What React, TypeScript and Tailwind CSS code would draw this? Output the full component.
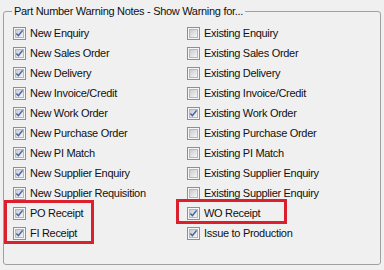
const left: [string, boolean][] = [
	["New Enquiry", true],
	["New Sales Order", true],
	["New Delivery", true],
	["New Invoice/Credit", true],
	["New Work Order", true],
	["New Purchase Order", true],
	["New PI Match", true],
	["New Supplier Enquiry", true],
	["New Supplier Requisition", true],
	["PO Receipt", true],
	["FI Receipt", true],
];

const right: [string, boolean][] = [
	["Existing Enquiry", false],
	["Existing Sales Order", false],
	["Existing Delivery", false],
	["Existing Invoice/Credit", false],
	["Existing Work Order", true],
	["Existing Purchase Order", false],
	["Existing PI Match", false],
	["Existing Supplier Enquiry", false],
	["Existing Supplier Enquiry", false],
	["WO Receipt", true],
	["Issue to Production", true],
];

function Box({ checked }: { checked: boolean }) {
	return (
		<svg width="13" height="13" viewBox="0 0 13 13" className="shrink-0">
			<defs>
				<linearGradient id="boxfill" x1="0" y1="0" x2="1" y2="1">
					<stop offset="0" stopColor="#c6c9cf" />
					<stop offset="1" stopColor="#f8f8f8" />
				</linearGradient>
			</defs>
			<rect x="0.5" y="0.5" width="12" height="12" fill="#f6f6f6" stroke="#8e8f8f" />
			<rect x="2.5" y="2.5" width="8" height="8" fill="url(#boxfill)" stroke="#b4b8be" />
			{checked && (
				<path
					d="M3.4 6.5 L5.4 8.7 L9.6 3.4"
					fill="none"
					stroke="#4462a0"
					strokeWidth="1.5"
				/>
			)}
		</svg>
	);
}

function Row({ label, checked }: { label: string; checked: boolean }) {
	return (
		<div className="flex h-[20px] items-center">
			<Box checked={checked} />
			<span className="ml-[4px] whitespace-nowrap text-[11px] leading-none tracking-[-0.3px] text-[#111]">
				{label}
			</span>
		</div>
	);
}

export default function App() {
	return (
		<div
			className="relative h-[270px] w-[384px] overflow-hidden bg-[#f0f0f0] pt-[4px] pl-[3px]"
			style={{ fontFamily: '"Liberation Sans", Arial, sans-serif' }}
		>
			<fieldset className="h-[261px] w-[378px] rounded-[3px] border border-[#a0a0a0] pl-[8px]">
				<legend className="px-[2px] text-[11px] leading-[14px] tracking-[-0.3px] text-[#111]">
					Part Number Warning Notes - Show Warning for...
				</legend>
				<div className="ml-[1px] grid grid-cols-[174px_174px] pt-[5px]">
					<div className="flex flex-col">
						{left.map(([l, c], i) => (
							<Row key={i} label={l} checked={c} />
						))}
					</div>
					<div className="flex flex-col">
						{right.map(([l, c], i) => (
							<Row key={i} label={l} checked={c} />
						))}
					</div>
				</div>
			</fieldset>
			<div className="absolute left-[4px] top-[200px] h-[44px] w-[90px] border-[3px] border-[#d9202c]" />
			<div className="absolute left-[176px] top-[199px] h-[25px] w-[111px] border-[3px] border-[#d9202c]" />
		</div>
	);
}
